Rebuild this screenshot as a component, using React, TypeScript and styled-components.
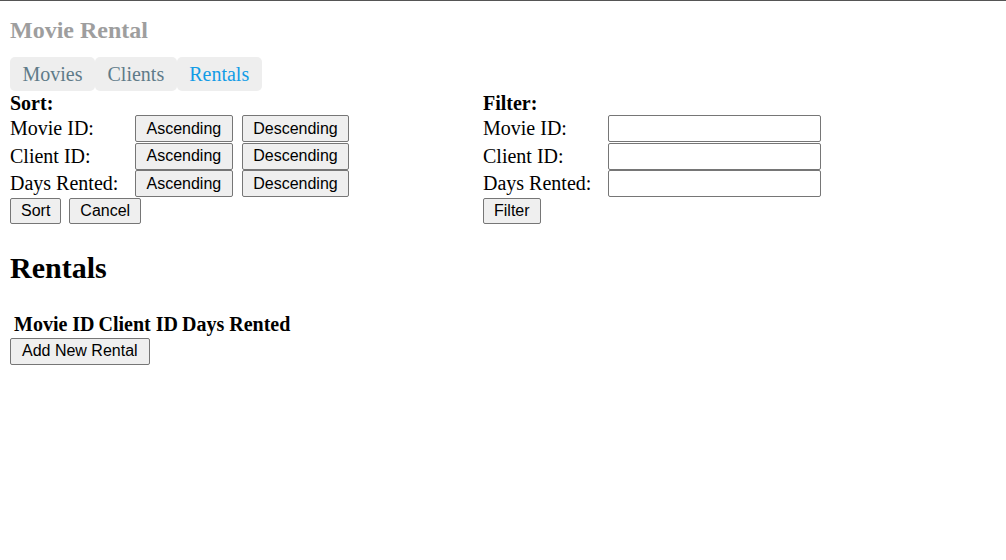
import React from 'react'
import styled, { createGlobalStyle } from 'styled-components'

const GlobalStyle = createGlobalStyle`
  body {
    margin: 0;
    border-top: 1px solid #555;
    font-family: 'Liberation Serif', 'Times New Roman', serif;
    font-size: 20px;
    color: #000;
    background: #fff;
  }
`

const Page = styled.div`
  padding: 0 10px;
`

const Title = styled.div`
  margin-top: 16px;
  font-size: 24px;
  font-weight: bold;
  color: #9e9e9e;
  line-height: 27px;
`

const Tabs = styled.div`
  display: flex;
  margin-top: 13px;
`

const Tab = styled.div<{ $active?: boolean }>`
  display: flex;
  align-items: center;
  height: 34px;
  padding: 0 12.5px;
  background: #eeeeee;
  border-radius: 5px;
  color: ${(p) => (p.$active ? '#129ce6' : '#5f7b89')};
  cursor: pointer;
`

const Controls = styled.div`
  display: grid;
  grid-template-columns: 473px 1fr;
`

const Panel = styled.div`
  display: flex;
  flex-direction: column;
`

const PanelTitle = styled.div`
  font-weight: bold;
  height: 24px;
  line-height: 24px;
`

const Row = styled.div`
  display: grid;
  grid-template-columns: 125px auto auto 1fr;
  align-items: center;
  height: 27.5px;
`

const Label = styled.span`
  line-height: 23px;
`

const Button = styled.button<{ $gap?: number }>`
  font-family: 'Liberation Sans', Arial, sans-serif;
  font-size: 16px;
  height: 27px;
  padding: 0 10.5px;
  margin-right: ${(p) => p.$gap ?? 0}px;
  background: #efefef;
  color: #000;
  border: 1px solid #767676;
  border-radius: 2px;
  cursor: pointer;
`

const Input = styled.input`
  box-sizing: border-box;
  width: 213px;
  height: 27px;
  border: 1px solid #767676;
  border-radius: 2px;
  font-size: 16px;
`

const Actions = styled.div`
  display: flex;
  gap: 8px;
  padding-top: 0.5px;
  height: 28px;
  align-items: flex-start;
  & > button {
    height: 26px;
    padding: 0 10px;
  }
`

const Heading = styled.h2`
  font-size: 30px;
  margin: 25px 0 25px;
  line-height: 34.5px;
`

const Table = styled.table`
  border-spacing: 2px;
  margin: -1px 0 -1px 1px;
  th {
    padding: 1px;
    text-align: left;
    line-height: 23px;
  }
`

const AddButton = styled(Button)`
  padding: 0 11px;
`

const sortFields = ['Movie ID:', 'Client ID:', 'Days Rented:']

export default function App() {
  return (
    <Page>
      <GlobalStyle />
      <Title>Movie Rental</Title>
      <Tabs>
        <Tab>Movies</Tab>
        <Tab>Clients</Tab>
        <Tab $active>Rentals</Tab>
      </Tabs>
      <Controls>
        <Panel>
          <PanelTitle>Sort:</PanelTitle>
          {sortFields.map((f) => (
            <Row key={f}>
              <Label>{f}</Label>
              <Button $gap={9}>Ascending</Button>
              <Button>Descending</Button>
            </Row>
          ))}
          <Actions>
            <Button>Sort</Button>
            <Button>Cancel</Button>
          </Actions>
        </Panel>
        <Panel>
          <PanelTitle>Filter:</PanelTitle>
          {sortFields.map((f) => (
            <Row key={f}>
              <Label>{f}</Label>
              <Input type="text" />
            </Row>
          ))}
          <Actions>
            <Button>Filter</Button>
          </Actions>
        </Panel>
      </Controls>
      <Heading>Rentals</Heading>
      <Table>
        <thead>
          <tr>
            <th>Movie ID</th>
            <th>Client ID</th>
            <th>Days Rented</th>
          </tr>
        </thead>
        <tbody></tbody>
      </Table>
      <AddButton>Add New Rental</AddButton>
    </Page>
  )
}
